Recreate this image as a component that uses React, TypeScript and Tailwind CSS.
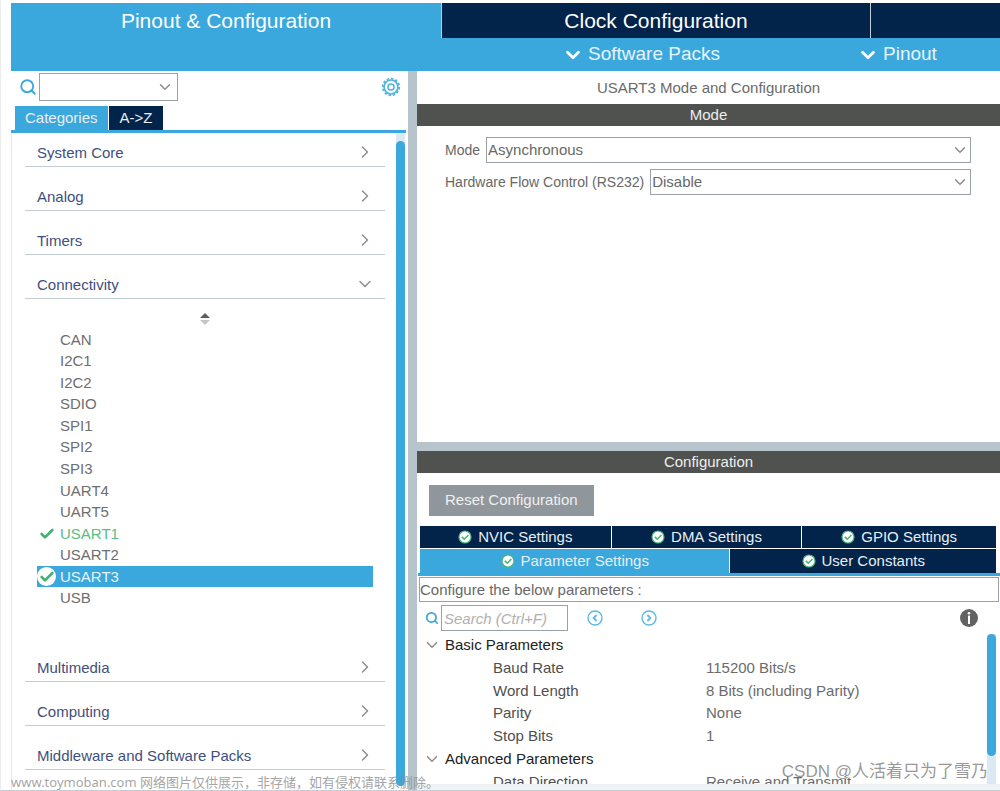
import { useState } from "react";
import { Check, ChevronDown, ChevronRight, Search } from "lucide-react";

const PERIPHERALS = [
  "CAN",
  "I2C1",
  "I2C2",
  "SDIO",
  "SPI1",
  "SPI2",
  "SPI3",
  "UART4",
  "UART5",
  "USART1",
  "USART2",
  "USART3",
  "USB",
];

const PARAMETER_GROUPS = [
  {
    title: "Basic Parameters",
    rows: [
      ["Baud Rate", "115200 Bits/s"],
      ["Word Length", "8 Bits (including Parity)"],
      ["Parity", "None"],
      ["Stop Bits", "1"],
    ],
  },
  {
    title: "Advanced Parameters",
    rows: [["Data Direction", "Receive and Transmit"]],
  },
];

function GearIcon(): React.ReactElement {
  return (
    <svg viewBox="0 0 20 20" className="size-5" fill="none" stroke="#4fb2e0">
      <circle cx="10" cy="10" r="7" strokeWidth="1.7" />
      <circle
        cx="10"
        cy="10"
        r="8.4"
        strokeWidth="1.6"
        pathLength="48"
        strokeDasharray="2.3 1.7"
      />
      <circle cx="10" cy="10" r="3.1" strokeWidth="1.5" />
    </svg>
  );
}

function StatusIcon(): React.ReactElement {
  return (
    <svg viewBox="0 0 14 14" className="size-3.5 shrink-0" fill="none">
      <circle cx="7" cy="7" r="6" fill="#fff" stroke="#4db57c" strokeWidth="1.2" />
      <path d="M3.8 6.8 6.3 9.2 10.4 5" stroke="#4db57c" strokeWidth="1.6" />
    </svg>
  );
}

function StepIcon({ d }: { d: string }): React.ReactElement {
  return (
    <svg viewBox="0 0 16 16" className="size-4" fill="none" stroke="#5db9e4">
      <circle cx="8" cy="8" r="7" strokeWidth="1.4" />
      <path d={d} strokeWidth="1.8" />
    </svg>
  );
}

function InfoIcon(): React.ReactElement {
  return (
    <svg viewBox="0 0 18 18" className="size-[18px]">
      <circle cx="9" cy="9" r="9" fill="#636363" />
      <circle cx="9" cy="4.2" r="1.3" fill="#fff" />
      <rect x="8" y="6.6" width="2" height="8.4" fill="#fff" />
    </svg>
  );
}

function SectionBar({ children }: { children: string }): React.ReactElement {
  return (
    <h2 className="h-[22px] shrink-0 bg-[#50524f] text-center text-[15px] leading-[22px] text-[#eeeeee]">
      {children}
    </h2>
  );
}

function Category({
  name,
  open = false,
}: {
  name: string;
  open?: boolean;
}): React.ReactElement {
  const Icon = open ? ChevronDown : ChevronRight;
  return (
    <button
      type="button"
      aria-expanded={open}
      className="flex h-11 w-full items-end justify-between border-b border-[#c3ced4] pr-2.5 pb-1 pl-3 text-left text-[15px] leading-[18px] text-[#3f4f7d]"
    >
      <span>{name}</span>
      <Icon className="size-5" color="#8e8e8e" strokeWidth={1.8} />
    </button>
  );
}

function Peripheral({
  name,
  selected,
  onSelect,
}: {
  name: string;
  selected: boolean;
  onSelect: () => void;
}): React.ReactElement {
  const color = selected
    ? "bg-[#3aa8dc] text-[#e6f4fb]"
    : name === "USART1"
      ? "text-[#5bbd84]"
      : "text-[#6e6e6e]";
  return (
    <li className="grid">
      <button
        type="button"
        onClick={onSelect}
        className={`flex items-center gap-1 text-left text-[15px] leading-5 ${color}`}
      >
        <span className="grid w-[19px] shrink-0 place-items-center">
          {selected ? (
            <span className="grid size-[19px] place-items-center rounded-full bg-white">
              <Check className="size-4 text-[#43b073]" strokeWidth={4} />
            </span>
          ) : name === "USART1" ? (
            <Check className="size-4 text-[#43b073]" strokeWidth={4} />
          ) : null}
        </span>
        {name}
      </button>
    </li>
  );
}

function ModeSelect({
  id,
  label,
  value,
}: {
  id: string;
  label: string;
  value: string;
}): React.ReactElement {
  return (
    <div className="flex items-center gap-1.5 text-[#686868]">
      <label htmlFor={id} className="shrink-0 text-[14px]">
        {label}
      </label>
      <div className="relative min-w-0 flex-1">
        <select
          id={id}
          className="block h-[26px] w-full appearance-none border border-[#98a2a8] bg-white pl-px text-[15px]"
        >
          <option>{value}</option>
        </select>
        <ChevronDown className="pointer-events-none absolute top-1 right-0.5 size-[18px] text-[#8e8e8e]" />
      </div>
    </div>
  );
}

function SettingsTab({
  label,
  active = false,
}: {
  label: string;
  active?: boolean;
}): React.ReactElement {
  return (
    <button
      type="button"
      role="tab"
      aria-selected={active}
      className={`flex items-center justify-center gap-1.5 text-[15px] leading-[22px] text-[#e9eef3] ${
        active ? "bg-[#3aa8dc]" : "bg-[#02234a]"
      }`}
    >
      <StatusIcon />
      {label}
    </button>
  );
}

function Header(): React.ReactElement {
  return (
    <header className="ml-2.5 shrink-0 bg-[#3aa8dc] text-white">
      <nav className="grid h-[35px] grid-cols-[430fr_429fr_130fr] text-[21px] leading-[34px]">
        <button type="button">Pinout &amp; Configuration</button>
        <button type="button" className="border-l border-[#c3ced4] bg-[#02234a]">
          Clock Configuration
        </button>
        <span className="border-l border-[#c3ced4] bg-[#02234a]" />
      </nav>
      <div className="grid h-[33px] grid-cols-[551fr_295fr_143fr] text-[19px] text-[#e6f4fb]">
        <span />
        <button type="button" className="flex items-center gap-1">
          <ChevronDown className="size-[22px] text-white" strokeWidth={3} />
          Software Packs
        </button>
        <button type="button" className="flex items-center gap-1">
          <ChevronDown className="size-[22px] text-white" strokeWidth={3} />
          Pinout
        </button>
      </div>
    </header>
  );
}

function CategoryPane(): React.ReactElement {
  const [selected, setSelected] = useState("USART3");

  return (
    <aside className="flex min-h-0 flex-col">
      <div className="mb-1 flex h-[31px] shrink-0 items-center pr-[7px] pl-2">
        <Search className="mr-0.5 size-[18px] text-[#3aa8dc]" strokeWidth={2.5} />
        <div className="relative w-[139px]">
          <select
            aria-label="Find peripheral"
            className="block h-7 w-full appearance-none border border-[#98a2a8] bg-white"
          />
          <ChevronDown className="pointer-events-none absolute top-[5px] right-1 size-[18px] text-[#8e8e8e]" />
        </div>
        <button type="button" aria-label="Settings" className="ml-auto">
          <GearIcon />
        </button>
      </div>
      <div
        role="tablist"
        className="mr-0.5 flex shrink-0 gap-px border-b-[3px] border-[#3aa8dc] pl-1 text-[15px] leading-[24px] text-[#e9eef3]"
      >
        <button type="button" role="tab" aria-selected className="bg-[#3aa8dc] px-2.5">
          Categories
        </button>
        <button type="button" role="tab" aria-selected={false} className="bg-[#02234a] px-[11px]">
          A-&gt;Z
        </button>
      </div>
      <div className="flex min-h-0 flex-1 overflow-hidden border-l border-[#e3e8eb]">
        <div className="-mt-2.5 flex-1 pr-[11px] pl-[13px]">
          <Category name="System Core" />
          <Category name="Analog" />
          <Category name="Timers" />
          <Category name="Connectivity" open />
          <div className="flex h-[30px] items-end justify-center pb-1">
            <svg viewBox="0 0 10 12" className="h-3 w-2.5">
              <path d="M5 0 10 5H0z" fill="#5e5e5e" />
              <path d="M5 12 0 7h10z" fill="#c6c6c6" />
            </svg>
          </div>
          <ul className="mr-3 ml-3 grid h-[280px] auto-rows-fr">
            {PERIPHERALS.map((name) => (
              <Peripheral
                key={name}
                name={name}
                selected={name === selected}
                onSelect={() => setSelected(name)}
              />
            ))}
          </ul>
          <div className="pt-[29px]">
            <Category name="Multimedia" />
            <Category name="Computing" />
            <Category name="Middleware and Software Packs" />
          </div>
        </div>
        <div className="mr-[3px] mb-1 w-[9px] bg-[#dbe9f5] pt-2">
          <div className="h-full rounded-full bg-[#3aa8dc]" />
        </div>
      </div>
    </aside>
  );
}

function ParameterTable(): React.ReactElement {
  return (
    <div className="mr-1 flex min-h-0 flex-1 overflow-hidden">
      <div className="min-w-0 flex-1">
        <table className="h-[159px] w-full table-fixed text-left text-[15px] leading-5 text-[#4f4f4f]">
          <colgroup>
            <col className="w-[289px]" />
            <col />
          </colgroup>
          {PARAMETER_GROUPS.map((group) => (
            <tbody key={group.title}>
              <tr>
                <th colSpan={2} className="p-0 font-normal text-[#222222]">
                  <span className="flex items-center gap-1 pl-1.5">
                    <ChevronDown className="size-[18px] text-[#8e8e8e]" />
                    {group.title}
                  </span>
                </th>
              </tr>
              {group.rows.map(([name, value]) => (
                <tr key={name}>
                  <td className="p-0 pl-[76px]">{name}</td>
                  <td className="p-0 text-[#6b6b6b]">{value}</td>
                </tr>
              ))}
            </tbody>
          ))}
        </table>
      </div>
      <div className="w-[9px] bg-[#dbe9f5]">
        <div className="h-[81%] rounded-full bg-[#3aa8dc]" />
      </div>
    </div>
  );
}

function ConfigurationPane(): React.ReactElement {
  return (
    <section className="flex min-h-0 flex-col">
      <SectionBar>Configuration</SectionBar>
      <button
        type="button"
        className="mt-3 mb-2.5 ml-3 h-[31px] shrink-0 self-start bg-[#90979c] px-4 text-[15px] text-[#eef0f1]"
      >
        Reset Configuration
      </button>
      <div role="tablist" className="ml-px shrink-0 border-b-[3px] border-[#3aa8dc] pr-1 pl-0.5">
        <div className="grid grid-cols-[191fr_190fr_194fr] gap-px pb-px">
          <SettingsTab label="NVIC Settings" />
          <SettingsTab label="DMA Settings" />
          <SettingsTab label="GPIO Settings" />
        </div>
        <div className="grid h-6 grid-cols-[310fr_266fr] gap-px">
          <SettingsTab label="Parameter Settings" active />
          <SettingsTab label="User Constants" />
        </div>
      </div>
      <p className="mt-px mr-px ml-0.5 h-[25px] shrink-0 border border-[#98a2a8] text-[15px] leading-[23px] text-[#686868]">
        Configure the below parameters :
      </p>
      <div className="mt-[3px] flex h-[26px] shrink-0 items-center pr-[22px] pl-2">
        <Search className="mr-0.5 size-3.5 text-[#3aa8dc]" strokeWidth={3} />
        <input
          type="text"
          aria-label="Search parameters"
          placeholder="Search (Ctrl+F)"
          className="h-[26px] w-[127px] border border-[#98a2a8] pl-0.5 text-[15px] italic placeholder:text-[#b0b0b0]"
        />
        <button type="button" aria-label="Previous match" className="ml-[19px]">
          <StepIcon d="M9.6 5 6.6 8l3 3" />
        </button>
        <button type="button" aria-label="Next match" className="ml-[38px]">
          <StepIcon d="M6.4 5l3 3-3 3" />
        </button>
        <button type="button" aria-label="Information" className="ml-auto">
          <InfoIcon />
        </button>
      </div>
      <div className="h-[3px] shrink-0" />
      <ParameterTable />
      <div className="h-1.5 shrink-0 bg-[#eef2f4]" />
    </section>
  );
}

export default function App(): React.ReactElement {
  return (
    <div className="relative flex h-screen min-h-[640px] flex-col overflow-hidden border-b border-l border-[#c3ced4] border-l-[#ececec] bg-white pt-[3px] font-['Liberation_Sans',Arial,sans-serif]">
      <Header />
      <main className="ml-[10px] grid min-h-0 flex-1 grid-cols-[397fr_592fr]">
        <CategoryPane />
        <div className="grid min-h-0 grid-rows-[371fr_339fr] gap-y-[9px] border-l-[9px] border-[#b8c4cb] bg-[#b8c4cb] *:bg-white">
          <section className="min-h-0">
            <h1 className="h-[33px] text-center text-[15px] leading-[33px] text-[#6b6b6b]">
              USART3 Mode and Configuration
            </h1>
            <SectionBar>Mode</SectionBar>
            <form className="flex flex-col gap-1.5 pt-[11px] pr-[29px] pl-7">
              <ModeSelect id="mode" label="Mode" value="Asynchronous" />
              <ModeSelect
                id="flow-control"
                label="Hardware Flow Control (RS232)"
                value="Disable"
              />
            </form>
          </section>
          <ConfigurationPane />
        </div>
      </main>
      <p className="pointer-events-none absolute bottom-0 left-2.5 font-['Noto_Sans','Noto_Sans_CJK_SC',sans-serif] text-[13px] leading-4 text-[#8d8d8d]/80">
        www.toymoban.com 网络图片仅供展示，非存储，如有侵权请联系删除。
      </p>
      <p className="pointer-events-none absolute right-3 bottom-1.5 font-['Liberation_Sans','Noto_Sans_CJK_SC',sans-serif] text-[17px] leading-6 text-[#7d7d7d]/80">
        CSDN @人活着只为了雪乃
      </p>
    </div>
  );
}
